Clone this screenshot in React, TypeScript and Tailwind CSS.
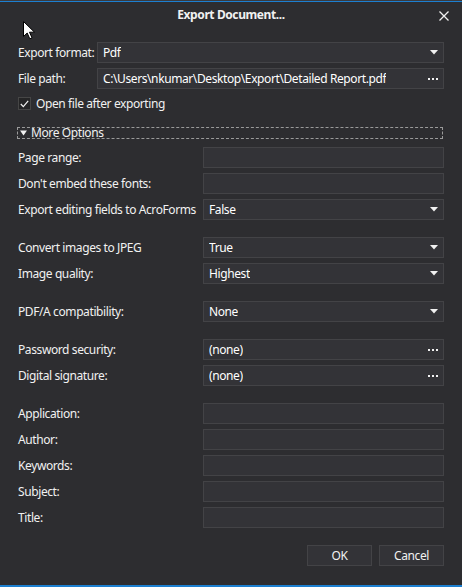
import React from 'react';

const font = { fontFamily: '"Noto Sans", "Open Sans", sans-serif' };

function Arrow() {
    return (
        <svg width="8" height="5" viewBox="0 0 8 5" className="shrink-0">
            <path d="M0 0 H8 L4 4.5 Z" fill="#f1f1f1" />
        </svg>
    );
}

function Dots() {
    return (
        <svg width="10" height="2" viewBox="0 0 10 2" className="shrink-0">
            <rect x="0" y="0" width="2" height="2" fill="#f1f1f1" />
            <rect x="4" y="0" width="2" height="2" fill="#f1f1f1" />
            <rect x="8" y="0" width="2" height="2" fill="#f1f1f1" />
        </svg>
    );
}

function Field({ value = '', kind = 'text' }: { value?: string; kind?: 'text' | 'select' | 'dots' }) {
    return (
        <div className="h-[21px] flex items-center justify-between bg-[#333337] border border-[#434346] pl-[5px] pr-[5px] text-white">
            <span className="truncate">{value}</span>
            {kind === 'select' && <Arrow />}
            {kind === 'dots' && <Dots />}
        </div>
    );
}

function Row({ label, value, kind }: { label: string; value?: string; kind?: 'text' | 'select' | 'dots' }) {
    return (
        <div className="grid grid-cols-[185px_1fr] items-center">
            <span className="text-[#f1f1f1] whitespace-nowrap">{label}</span>
            <Field value={value} kind={kind} />
        </div>
    );
}

export default function App() {
    return (
        <div className="relative w-[462px] h-[587px] bg-[#2d2d30] flex flex-col text-[12px] leading-[16px] tracking-[-0.4px] overflow-hidden" style={font}>
            <div className="h-px bg-[#3a3a3d]" />
            <div className="h-px bg-[#1c7fd0]" />

            {/* header */}
            <div className="h-[40px] relative flex justify-center pt-[5px]">
                <span className="font-bold text-[#f1f1f1]">Export Document...</span>
                <svg width="10" height="10" viewBox="0 0 10 10" className="absolute right-[13px] top-[9px]">
                    <path d="M0.5 0.5 L9.5 9.5 M9.5 0.5 L0.5 9.5" stroke="#f1f1f1" strokeWidth="1.3" />
                </svg>
            </div>

            <div className="flex-1 flex flex-col px-[18px]">
                <div className="flex flex-col gap-[5px]">
                    <div className="grid grid-cols-[79px_1fr] items-center">
                        <span className="text-[#f1f1f1] whitespace-nowrap">Export format:</span>
                        <Field value="Pdf" kind="select" />
                    </div>
                    <div className="grid grid-cols-[79px_1fr] items-center">
                        <span className="text-[#f1f1f1] whitespace-nowrap">File path:</span>
                        <Field value="C:\Users\nkumar\Desktop\Export\Detailed Report.pdf" kind="dots" />
                    </div>
                </div>

                <div className="mt-[8px] flex items-center gap-[5px] h-[13px]">
                    <div className="w-[13px] h-[13px] border border-[#464646] bg-[#252526] flex items-center justify-center">
                        <svg width="9" height="8" viewBox="0 0 9 8">
                            <path d="M0.8 4 L3.3 6.6 L8.2 0.8" stroke="#f1f1f1" strokeWidth="1.2" fill="none" />
                        </svg>
                    </div>
                    <span className="text-[#f1f1f1] whitespace-nowrap">Open file after exporting</span>
                </div>

                <div className="mt-[17px] mr-[1px] -ml-px h-[12px] border border-dashed border-[#9a9a9a] flex items-center gap-[4px] pl-[2px]">
                    <svg width="7" height="6" viewBox="0 0 7 6">
                        <path d="M0 0.5 H7 L3.5 5.5 Z" fill="#f1f1f1" />
                    </svg>
                    <span className="text-[#f1f1f1] whitespace-nowrap">More Options</span>
                </div>

                <div className="mt-[8px] flex flex-col gap-[5px]">
                    <Row label="Page range:" />
                    <Row label="Don't embed these fonts:" />
                    <Row label="Export editing fields to AcroForms" value="False" kind="select" />
                </div>

                <div className="mt-[17px] flex flex-col gap-[5px]">
                    <Row label="Convert images to JPEG" value="True" kind="select" />
                    <Row label="Image quality:" value="Highest" kind="select" />
                </div>

                <div className="mt-[17px] flex flex-col gap-[5px]">
                    <Row label="PDF/A compatibility:" value="None" kind="select" />
                </div>

                <div className="mt-[17px] flex flex-col gap-[5px]">
                    <Row label="Password security:" value="(none)" kind="dots" />
                    <Row label="Digital signature:" value="(none)" kind="dots" />
                </div>

                <div className="mt-[17px] flex flex-col gap-[5px]">
                    <Row label="Application:" />
                    <Row label="Author:" />
                    <Row label="Keywords:" />
                    <Row label="Subject:" />
                    <Row label="Title:" />
                </div>

                <div className="mt-[17px] flex justify-end gap-[7px]">
                    <button className="w-[65px] h-[21px] bg-[#333337] border border-[#434346] text-[#f1f1f1]">OK</button>
                    <button className="w-[65px] h-[21px] bg-[#333337] border border-[#434346] text-[#f1f1f1]">Cancel</button>
                </div>
            </div>

            <div className="h-[2px] bg-[#1c7fd0]" />

            {/* mouse pointer */}
            <svg width="13" height="19" viewBox="0 0 13 19" className="absolute left-[23px] top-[21px]">
                <path d="M0.5 0.5 V15.5 L4.2 12 L6.8 17.8 L9 16.8 L6.5 11.2 H11.5 Z" fill="#ffffff" stroke="#000000" strokeWidth="1" strokeLinejoin="round" />
            </svg>
        </div>
    );
}
